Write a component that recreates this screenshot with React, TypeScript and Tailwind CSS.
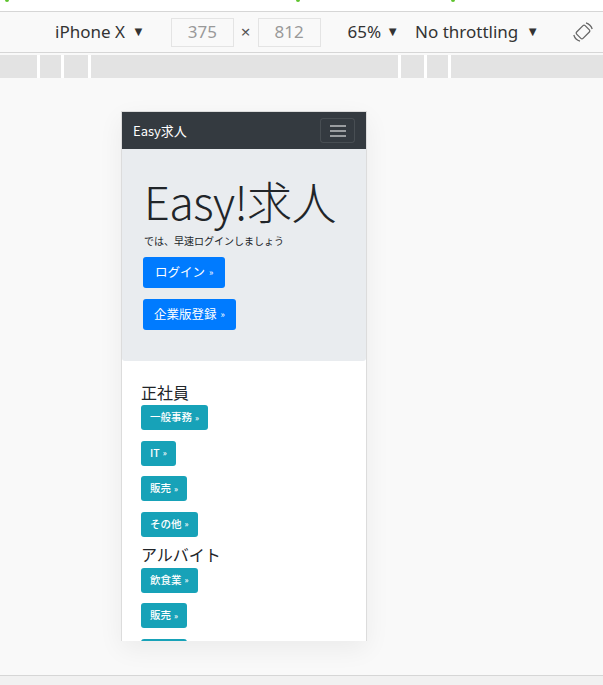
import React from 'react';

const jp = { fontFamily: '"Noto Sans CJK JP", "Noto Sans", sans-serif' };
const ui = { fontFamily: '"Noto Sans", "Liberation Sans", sans-serif' };

const fullTime = ['一般事務', 'IT', '販売', 'その他'];
const partTime = ['飲食業', '販売', '事務'];

function InfoButton({ label }: { label: string }) {
  return (
    <div className="flex">
      <button className="h-[25px] px-[9px] rounded-[3px] bg-[#17a2b8] text-white text-[10.5px] font-medium leading-none flex items-center gap-[3px]">
        <span>{label}</span>
        <span className="text-[8px]">»</span>
      </button>
    </div>
  );
}

function RotateIcon() {
  return (
    <svg width="22" height="22" viewBox="0 0 22 22" fill="none" stroke="#666" strokeWidth="1.3">
      <rect x="5" y="6.5" width="12" height="9" rx="1.5" transform="rotate(-45 11 11)" />
      <path d="M14 1.8 A9.5 9.5 0 0 1 20.2 8" />
      <path d="M8 20.2 A9.5 9.5 0 0 1 1.8 14" />
    </svg>
  );
}

export default function App() {
  return (
    <div className="w-[603px] h-[685px] bg-[#f9f9f9] overflow-hidden flex flex-col" style={ui}>
      {/* top strip */}
      <div className="h-[11px] bg-white flex shrink-0">
        <span className="ml-[5px] w-[4px] h-[2px] bg-[#5ec32e] rounded-b-full" />
        <span className="ml-[287px] w-[4px] h-[2px] bg-[#5ec32e] rounded-b-full" />
        <span className="ml-[151px] w-[4px] h-[2px] bg-[#5ec32e] rounded-b-full" />
      </div>
      <div className="h-px bg-[#d6d6d6] shrink-0" />

      {/* device toolbar */}
      <div className="h-[40px] bg-[#f9f9f9] flex items-center text-[#333] text-[17px] shrink-0">
        <span className="ml-[55px]">iPhone X</span>
        <span className="ml-[7px] text-[13px]">▼</span>
        <div className="ml-[26px] w-[63px] h-[29px] border border-[#e4e4e4] bg-[#f9f9f9] flex items-center justify-center text-[#999]">375</div>
        <span className="mx-[7px] text-[#555]">×</span>
        <div className="w-[63px] h-[29px] border border-[#e4e4e4] bg-[#f9f9f9] flex items-center justify-center text-[#999]">812</div>
        <span className="ml-[27px]">65%</span>
        <span className="ml-[5px] text-[13px]">▼</span>
        <span className="ml-[16px]">No throttling</span>
        <span className="ml-[8px] text-[13px]">▼</span>
        <span className="ml-[33px] flex"><RotateIcon /></span>
      </div>
      <div className="h-px bg-[#d6d6d6] shrink-0" />

      {/* ruler */}
      <div className="mt-[2px] h-[23px] bg-[#e3e3e3] flex shrink-0">
        <span className="ml-[37px] w-[3px] bg-white" />
        <span className="ml-[21px] w-[3px] bg-white" />
        <span className="ml-[24px] w-[3px] bg-white" />
        <span className="ml-[307px] w-[3px] bg-white" />
        <span className="ml-[23px] w-[3px] bg-white" />
        <span className="ml-[21px] w-[3px] bg-white" />
      </div>

      {/* viewport */}
      <div className="flex-1 pt-[33px] pl-[121px]">
        <div className="w-[246px] h-[530px] border border-[#dcdcdc] border-b-0 bg-white overflow-hidden shadow-[0_8px_24px_rgba(0,0,0,0.06)]" style={jp}>
          {/* navbar */}
          <div className="h-[37px] bg-[#343a40] flex items-center justify-between pl-[11px] pr-[11px]">
            <span className="text-white text-[13px]">Easy求人</span>
            <div className="w-[35px] h-[25px] border border-white/10 rounded-[3px] flex flex-col items-center justify-center gap-[3px]">
              <span className="w-[16px] h-[2px] bg-white/50" />
              <span className="w-[16px] h-[2px] bg-white/50" />
              <span className="w-[16px] h-[2px] bg-white/50" />
            </div>
          </div>

          {/* jumbotron */}
          <div className="bg-[#e9ecef] h-[212px] rounded-b-[3px] pl-[22px] pt-[24px]">
            <h1 className="text-[45px] font-light leading-[55px] text-[#212529] tracking-[-0.6px]">Easy!求人</h1>
            <p className="text-[10px] leading-[12px] text-[#212529] mt-[7px]">では、早速ログインしましょう</p>
            <div className="mt-[10px] -ml-[1px] flex flex-col items-start gap-[11px]">
              <button className="h-[31px] px-[12px] rounded-[3px] bg-[#007bff] text-white text-[12.5px] flex items-center gap-[4px]">
                <span>ログイン</span><span className="text-[9px]">»</span>
              </button>
              <button className="h-[31px] px-[11px] rounded-[3px] bg-[#007bff] text-white text-[12.5px] flex items-center gap-[4px]">
                <span>企業版登録</span><span className="text-[9px]">»</span>
              </button>
            </div>
          </div>

          {/* job categories */}
          <div className="pl-[19px] pt-[21px]">
            <h2 className="text-[16px] leading-[21px] text-[#212529]">正社員</h2>
            <div className="flex flex-col gap-[10.5px] mt-[2px]">
              {fullTime.map((l) => <InfoButton key={l} label={l} />)}
            </div>
            <h2 className="text-[16px] leading-[21px] text-[#212529] mt-[7px]">アルバイト</h2>
            <div className="flex flex-col gap-[10.5px] mt-[3px]">
              {partTime.map((l, i) => <InfoButton key={i} label={l} />)}
            </div>
          </div>
        </div>
      </div>

      {/* bottom */}
      <div className="h-px bg-[#d6d6d6] shrink-0" />
      <div className="h-[9px] bg-[#f1f1f1] shrink-0" />
    </div>
  );
}
